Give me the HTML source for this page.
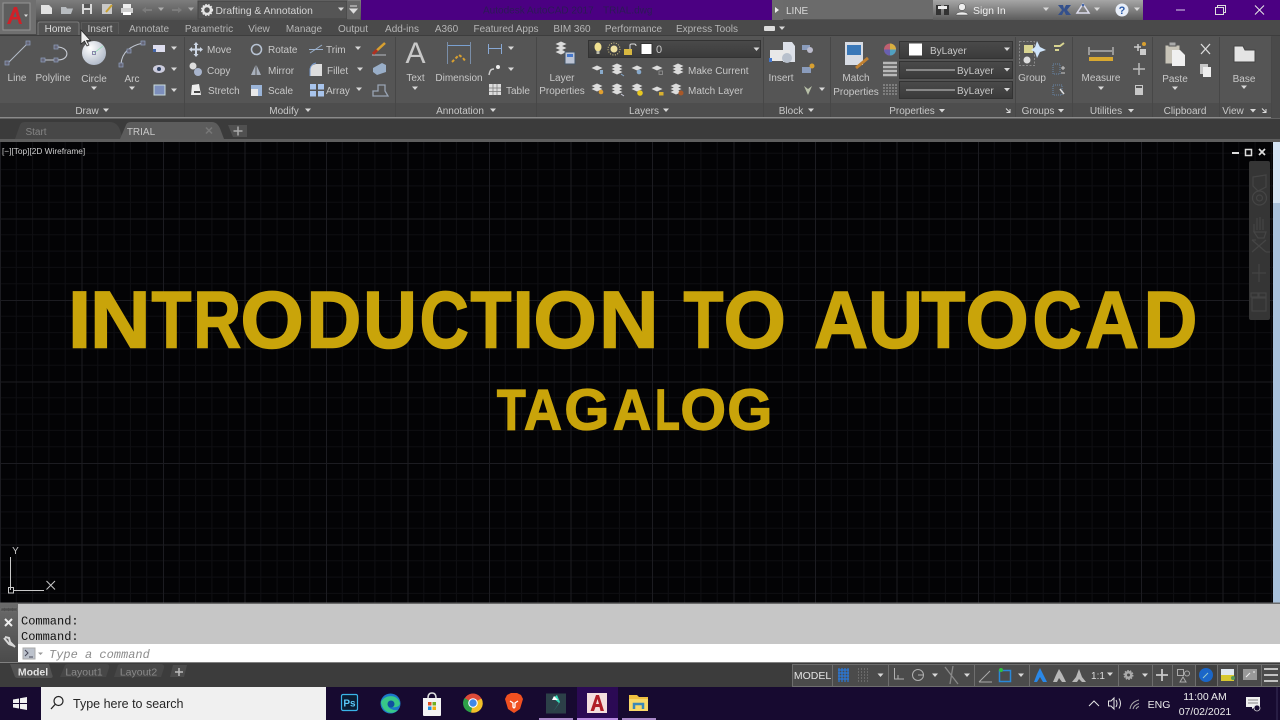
<!DOCTYPE html>
<html><head><meta charset="utf-8"><title>AutoCAD</title>
<style>
html,body{margin:0;padding:0;background:#000;width:1280px;height:720px;overflow:hidden}
svg{display:block;filter:blur(.3px)}
text{font-family:"Liberation Sans",sans-serif;font-size:10px;fill:#c8c8c8}
.m{text-anchor:middle}
.h{font-weight:700;fill:#c9a40a;font-size:81px;stroke:#c9a40a;stroke-width:1.500px}
.s{font-weight:700;fill:#c9a40a;font-size:57.500px;stroke:#c9a40a;stroke-width:1.300px}
.c{font-family:"Liberation Mono",monospace;font-size:12px;fill:#111}
</style></head><body>
<svg width="1280" height="720" viewBox="0 0 1280 720" xmlns="http://www.w3.org/2000/svg">
<defs>
<linearGradient id="tg" x1="0" y1="0" x2="0" y2="1"><stop offset="0" stop-color="#7d7d7d"/><stop offset="1" stop-color="#525252"/></linearGradient>
<linearGradient id="sg" x1="0" y1="0" x2="0" y2="1"><stop offset="0" stop-color="#a6a6a6"/><stop offset="1" stop-color="#5c5c5c"/></linearGradient>
<linearGradient id="cg" x1="0" y1="0" x2="0" y2="1"><stop offset="0" stop-color="#4a4a4a"/><stop offset="1" stop-color="#3a3a3a"/></linearGradient>
<linearGradient id="lg" x1="0" y1="0" x2="0" y2="1"><stop offset="0" stop-color="#6a6a6a"/><stop offset="1" stop-color="#4a4a4a"/></linearGradient>
<radialGradient id="circ" cx=".35" cy=".3" r=".8"><stop offset="0" stop-color="#fff"/><stop offset="1" stop-color="#aab4c4"/></radialGradient>
<pattern id="grid" patternUnits="userSpaceOnUse" width="81.5" height="81.5" y="55.5">
<path d="M16.3 0V81.5M32.6 0V81.5M48.9 0V81.5M65.2 0V81.5M0 16.3H81.5M0 32.6H81.5M0 48.9H81.5M0 65.2H81.5" stroke="#0e0e12" stroke-width="1" fill="none"/>
<path d="M.5 0V81.5M0 .5H81.5" stroke="#1c1c21" stroke-width="1" fill="none"/>
</pattern>
<g id="arr"><path d="M-3 -1.5H3L0 2Z" fill="#d8d8d8"/></g>
<g id="lay"><path d="M-5.5 0L0 -2.500L5.500 0L0 2.500Z" fill="#dcdcdc"/></g>
</defs>

<!-- title bar -->
<rect width="1280" height="20" fill="url(#tg)"/>
<rect x="361" width="411" height="20" fill="#4b0082"/>
<rect x="1143" width="137" height="20" fill="#4b0082"/>
<rect x="772" width="11" height="20" fill="#6c6c6c"/>
<path d="M775 7L779 10L775 13Z" fill="#eee"/>
<rect x="783" width="150" height="19" fill="#6b6b6b"/>
<text x="786" y="14" style="font-size:10px;fill:#d8d8d8">LINE</text>
<rect x="933" width="210" height="20" fill="url(#sg)"/>
<text x="483" y="13.500" style="fill:#2c1a55">Autodesk AutoCAD 2017</text>
<text x="603" y="13.500" style="fill:#2c1a55">TRIAL.dwg</text>
<!-- QAT -->
<path d="M41 5H49L52 8V14H41Z" fill="#e2e2e2"/>
<path d="M61 7H66L67 8.500H73L71 14H61Z" fill="#b8bcc0"/>
<rect x="82" y="4" width="10" height="10" fill="#d8d8d8"/><rect x="84" y="4" width="6" height="4" fill="#555"/><rect x="84" y="10" width="6" height="4" fill="#666"/>
<rect x="102" y="4" width="10" height="10" fill="#c8c8c8"/><path d="M106 12L112 5" stroke="#c9a030" stroke-width="2"/>
<rect x="121" y="8" width="12" height="5" fill="#d0d0d0"/><rect x="123" y="4" width="8" height="4" fill="#eee"/><rect x="123" y="12" width="8" height="3" fill="#fff"/>
<path d="M142 10L146 7V13ZM146 9H152V11H146Z" fill="#7c7c7c"/><use href="#arr" x="161" y="9" opacity=".6"/>
<path d="M182 10L178 7V13ZM172 9H178V11H172Z" fill="#7c7c7c"/><use href="#arr" x="191" y="9" opacity=".6"/>
<rect x="198" y="1" width="149" height="18" fill="#555" stroke="#444"/>
<circle cx="207" cy="10" r="4" fill="none" stroke="#e4e4e4" stroke-width="2.500"/>
<circle cx="207" cy="10" r="5.500" fill="none" stroke="#e4e4e4" stroke-width="1.200" stroke-dasharray="1.500 1.500"/>
<text x="215.500" y="14" style="font-size:10.300px;fill:#d4d4d4">Drafting &amp; Annotation</text>
<use href="#arr" x="341" y="9"/>
<rect x="347" y="1" width="13" height="18" fill="#666"/>
<path d="M350 6H357M350 9H357L353.500 13Z" stroke="#ddd" stroke-width="1" fill="#ddd"/>
<!-- right of title -->
<path d="M936 5H941V15H936ZM944 5H949V15H944Z" fill="#333"/><rect x="938" y="6" width="9" height="3" fill="#eee"/>
<circle cx="962" cy="7" r="3.500" fill="#eee" stroke="#444" stroke-width=".500"/><path d="M956 15C956 11 968 11 968 15Z" fill="#eee" stroke="#444" stroke-width=".500"/>
<text x="973" y="14" style="font-size:10.500px;fill:#f0f0f0">Sign In</text>
<use href="#arr" x="1046" y="9" />
<path d="M1058 5L1063 5L1064 9L1066 5H1071L1067 10L1071 15H1066L1064 11L1062 15H1058L1062 10Z" fill="#34508c"/>
<path d="M1083 4L1089 13H1077Z" fill="none" stroke="#dde" stroke-width="1.500"/><circle cx="1083" cy="5" r="1.300" fill="#46a"/><use href="#arr" x="1097" y="9"/>
<circle cx="1122" cy="10" r="6.500" fill="#e8eef8"/><text x="1122" y="14" class="m" style="font-size:11px;font-weight:700;fill:#2a5aa8">?</text>
<use href="#arr" x="1137" y="9"/>
<path d="M1176 10H1185" stroke="#d8d0e8" stroke-width="1"/>
<path d="M1215.500 7.500H1223.500V14.500H1215.500ZM1217.500 7.500V5.500H1225.500V12.500H1223.500" fill="none" stroke="#ddd" stroke-width="1"/>
<path d="M1255 5.500L1264 14.500M1264 5.500L1255 14.500" stroke="#e8e8e8" stroke-width="1"/>

<!-- tabs row -->
<rect y="20" width="1280" height="16" fill="#4a4a4a"/>
<rect x="0" y="0" width="36" height="34" fill="#6f6f6f"/>
<rect x="3" y="3" width="27" height="27" fill="#5e5e5e" stroke="#959595"/>
<path d="M7 24L14 7H17L22 24H19L17.700 19.500H12.300L10.300 24ZM13.300 17H16.800L15.300 11.500Z" fill="#cf2128"/>
<path d="M24 14.500H28L26 17Z" fill="#ddd"/>
<path d="M38 36V24Q38 22 40 22H77Q79 22 79 24V36Z" fill="#535353" stroke="#7a7a7a"/>
<path d="M81.500 34V22.500H118.500V34" fill="#4d4d4d" stroke="#5a5a5a"/>
<g>
<text x="58" y="32" class="m" style="fill:#dcdcdc">Home</text>
<text x="100" y="32" class="m">Insert</text>
<text x="149" y="32" class="m" style="fill:#b5b5b5">Annotate</text>
<text x="209" y="32" class="m" style="fill:#b5b5b5">Parametric</text>
<text x="259" y="32" class="m" style="fill:#b5b5b5">View</text>
<text x="304" y="32" class="m" style="fill:#b5b5b5">Manage</text>
<text x="353" y="32" class="m" style="fill:#b5b5b5">Output</text>
<text x="402" y="32" class="m" style="fill:#b5b5b5">Add-ins</text>
<text x="446.500" y="32" class="m" style="fill:#b5b5b5">A360</text>
<text x="506" y="32" class="m" style="fill:#b5b5b5">Featured Apps</text>
<text x="572" y="32" class="m" style="fill:#b5b5b5">BIM 360</text>
<text x="633.500" y="32" class="m" style="fill:#b5b5b5">Performance</text>
<text x="707" y="32" class="m" style="fill:#b5b5b5">Express Tools</text>
</g>
<rect x="764" y="26" width="11" height="5" rx="1" fill="#ddd"/><use href="#arr" x="782" y="28"/>

<!-- ribbon -->
<rect y="35" width="1280" height="1" fill="#3d3d3d"/>
<rect y="36" width="1280" height="82" fill="#555"/>
<rect y="103" width="1271" height="14" fill="#4d4d4d"/>
<rect y="117" width="1280" height="1.500" fill="#8a8a8a"/>
<rect x="1271" y="36" width="9" height="82" fill="#4a4a4a"/>
<path d="M184.500 37V117M395.500 37V117M536.500 37V117M763.500 37V117M830.500 37V117M1015.500 37V117M1072.500 37V117M1152.500 37V117M1219.500 37V117M1271.500 37V117" stroke="#474747" stroke-width="1"/>

<!-- Draw -->
<path d="M7 64L28 43" stroke="#b4bcc8" stroke-width="1"/><rect x="5" y="61" width="4" height="4" fill="#667" stroke="#8fa0c0" stroke-width=".7"/><rect x="26" y="41" width="4" height="4" fill="#667" stroke="#8fa0c0" stroke-width=".7"/>
<path d="M43 60H58C70 60 70 47 57 47" fill="none" stroke="#c8ccd4" stroke-width="1.100"/><rect x="41" y="58" width="4" height="4" fill="#667" stroke="#8fa0c0" stroke-width=".7"/><rect x="54" y="58" width="4" height="4" fill="#667" stroke="#8fa0c0" stroke-width=".7"/><rect x="54" y="45" width="4" height="4" fill="#667" stroke="#8fa0c0" stroke-width=".7"/>
<circle cx="94" cy="53" r="12" fill="url(#circ)"/><path d="M94 53L103 46" stroke="#9db" stroke-width=".8"/><rect x="92.500" y="51.500" width="3" height="3" fill="none" stroke="#88a"/>
<path d="M121 64C122 52 130 46 143 43" fill="none" stroke="#c0c6d0" stroke-width="1.100"/><rect x="119" y="63" width="4" height="4" fill="#667" stroke="#8fa0c0" stroke-width=".7"/><rect x="127" y="49" width="4" height="4" fill="#667" stroke="#8fa0c0" stroke-width=".7"/><rect x="141" y="41" width="4" height="4" fill="#667" stroke="#8fa0c0" stroke-width=".7"/>
<text x="17" y="81" class="m">Line</text><text x="53" y="81" class="m">Polyline</text><text x="94" y="82" class="m">Circle</text><text x="132" y="82" class="m">Arc</text>
<use href="#arr" x="94" y="88"/><use href="#arr" x="132" y="88"/>
<path d="M153 45H165V52H153Z" fill="#dde"/><rect x="153" y="49" width="3" height="3" fill="#46a"/><use href="#arr" x="174" y="48"/>
<ellipse cx="159" cy="69" rx="6" ry="4" fill="#ccd"/><circle cx="159" cy="69" r="2" fill="#346"/><use href="#arr" x="174" y="69"/>
<rect x="154" y="85" width="11" height="10" fill="#7d8fbc" stroke="#cdd" /><use href="#arr" x="174" y="90"/>
<text x="87" y="114" class="m">Draw</text><use href="#arr" x="106" y="110"/>

<!-- Modify -->
<path d="M196 44V55M190.500 49.500H201.500" stroke="#cdd6e4" stroke-width="2"/><path d="M196 42L198.500 45H193.500ZM196 57L198.500 54H193.500ZM189 49.500L192 47V52ZM203 49.500L200 47V52Z" fill="#cdd6e4"/>
<circle cx="193" cy="66" r="3.500" fill="#ddd"/><circle cx="198" cy="72" r="4" fill="#a8b4cc"/>
<path d="M192 85L199 84L201 95H191Z" fill="#eee"/><path d="M194 92H200" stroke="#111" stroke-width="1.500"/>
<text x="207" y="53">Move</text><text x="207" y="74">Copy</text><text x="208" y="94">Stretch</text>
<circle cx="256.500" cy="49.500" r="5" fill="none" stroke="#b8c4d4" stroke-width="1.500"/>
<path d="M251 75L256 64L261 75Z" fill="#a8b0bc"/><path d="M256 64V75" stroke="#555"/>
<rect x="251" y="85" width="11" height="11" fill="#9ab4d8"/><rect x="251" y="89" width="7" height="7" fill="#e8e8e8"/>
<text x="268" y="53">Rotate</text><text x="268" y="74">Mirror</text><text x="268" y="94">Scale</text>
<path d="M310 53L322 45M309 49.500H323" stroke="#9ab0cc" stroke-width="1"/>
<path d="M310 76V70Q310 65 316 64H322V76Z" fill="#ddd"/><path d="M310 76V69Q311 64 316 63" stroke="#79c" fill="none"/>
<rect x="310" y="84" width="6" height="5.500" fill="#a8c4ec"/><rect x="318" y="84" width="6" height="5.500" fill="#a8c4ec"/><rect x="310" y="91" width="6" height="5.500" fill="#a8c4ec"/><rect x="318" y="91" width="6" height="5.500" fill="#a8c4ec"/>
<text x="326" y="53">Trim</text><text x="327" y="74">Fillet</text><text x="326" y="94">Array</text>
<use href="#arr" x="358" y="48"/><use href="#arr" x="360" y="69"/><use href="#arr" x="359" y="89"/>
<path d="M374 53L385 43" stroke="#d8a030" stroke-width="2.500"/><path d="M372 55H386" stroke="#b8bcc4" stroke-width="1"/><path d="M373 54L377 50" stroke="#b03020" stroke-width="3"/>
<path d="M373 68L382 63L386 65V72L377 75L373 72Z" fill="#99aec8"/>
<path d="M373 96V91H378V85H385V91L388 96Z" fill="none" stroke="#99a4b4" stroke-width="1.300"/>
<text x="284" y="114" class="m">Modify</text><use href="#arr" x="308" y="110"/>

<!-- Annotation -->
<text x="415.500" y="63" class="m" style="font-size:30px;fill:#c8c8c8">A</text>
<text x="415.500" y="81" class="m">Text</text><use href="#arr" x="415" y="88"/>
<path d="M447.500 42V64M470.500 42V64" stroke="#7a8ea8" stroke-width="1"/><path d="M448 45.500H470" stroke="#7aa0d0" stroke-width="1"/>
<path d="M452 62L456 58L459 55L463 58L466 62" stroke="#d8a030" stroke-width="2" stroke-dasharray="3 2" fill="none"/>
<text x="459" y="81" class="m">Dimension</text>
<path d="M488.500 44V54M501.500 44V54M489 48.500H501" stroke="#88a8d4" stroke-width="1"/><use href="#arr" x="511" y="48"/>
<path d="M489 75C490 70 491 69 494 69" fill="none" stroke="#ccc" stroke-width="1.500"/><circle cx="498" cy="67" r="2" fill="#eee"/><use href="#arr" x="511" y="69"/>
<rect x="489" y="84" width="12" height="11" fill="#dcdcdc"/><path d="M489 88H501M489 91.500H501M493 84V95M497 84V95" stroke="#777" stroke-width=".700"/>
<text x="506" y="94">Table</text>
<text x="460" y="114" class="m">Annotation</text><use href="#arr" x="493" y="110"/>

<!-- Layers -->
<use href="#lay" x="561" y="44"/><use href="#lay" x="561" y="48"/><use href="#lay" x="561" y="52"/>
<rect x="565" y="52" width="10" height="12" fill="#bcc4d4" stroke="#456"/><rect x="567" y="54" width="6" height="3" fill="#47c"/>
<text x="562" y="81" class="m">Layer</text><text x="562" y="94" class="m">Properties</text>
<rect x="588.500" y="40.500" width="172" height="17" fill="url(#cg)" stroke="#333"/>
<ellipse cx="598" cy="47" rx="3.500" ry="4.500" fill="#f0e090"/><rect x="596.500" y="51" width="3" height="3" fill="#bba"/>
<circle cx="614" cy="49" r="3.500" fill="#eee0a0"/><circle cx="614" cy="49" r="6" fill="none" stroke="#d8c888" stroke-width="1" stroke-dasharray="1 1.500"/>
<rect x="624" y="49" width="8" height="6" fill="#d8b840"/><path d="M630 49V45Q630 44 632 44H634Q636 44 636 46" stroke="#ddd" fill="none"/>
<rect x="641" y="43.500" width="11" height="11" fill="#fff" stroke="#333"/>
<text x="656" y="53" style="font-size:11px">0</text><use href="#arr" x="756.500" y="49"/>
<g>
<use href="#lay" x="597" y="68"/><rect x="600" y="70" width="3" height="4" fill="#8ac"/>
<use href="#lay" x="617" y="66"/><use href="#lay" x="617" y="69"/><use href="#lay" x="617" y="72"/><path d="M621 74L624 76" stroke="#8ac"/>
<use href="#lay" x="637" y="68"/><circle cx="639" cy="72" r="2.300" fill="#8ac"/>
<use href="#lay" x="657" y="68"/><rect x="659" y="71" width="3.500" height="3.500" fill="none" stroke="#888"/>
<use href="#lay" x="678" y="66"/><use href="#lay" x="678" y="69"/><use href="#lay" x="678" y="72"/>
<use href="#lay" x="597" y="86"/><use href="#lay" x="597" y="89"/><circle cx="601" cy="92" r="2.300" fill="#e0a030"/>
<use href="#lay" x="617" y="86"/><use href="#lay" x="617" y="89"/><use href="#lay" x="617" y="92"/><path d="M621 94L624 96" stroke="#ccd"/>
<use href="#lay" x="637" y="86"/><use href="#lay" x="637" y="89"/><circle cx="640" cy="93" r="2.800" fill="#e8c820"/>
<use href="#lay" x="657" y="89"/><rect x="659" y="92" width="4.500" height="3.500" fill="#d8b030"/>
<use href="#lay" x="676" y="86"/><use href="#lay" x="676" y="89"/><use href="#lay" x="676" y="92"/><circle cx="681" cy="93" r="2.500" fill="#a85828"/>
</g>
<text x="688" y="74">Make Current</text><text x="688" y="94">Match Layer</text>
<text x="644" y="114" class="m">Layers</text><use href="#arr" x="666" y="110"/>

<!-- Block -->
<path d="M783 42H792L795 46V62H783Z" fill="#dce0e8"/><rect x="770" y="50" width="20" height="11" fill="#e8e8e8"/><rect x="769" y="58" width="3" height="4" fill="#47c"/><circle cx="787" cy="58" r="5" fill="#b8c0cc"/>
<text x="781" y="81" class="m">Insert</text>
<rect x="802" y="45" width="8" height="5" fill="#8a9cbc"/><circle cx="810" cy="50" r="3" fill="#bbc"/>
<rect x="802" y="67" width="9" height="6" fill="#8a9cbc"/><circle cx="812" cy="66" r="2.500" fill="#d8a030"/>
<path d="M804 86L808 95L812 86L808 89Z" fill="#b8c0a8"/><use href="#arr" x="822" y="89"/>
<text x="791" y="114" class="m">Block</text><use href="#arr" x="811" y="110"/>

<!-- Properties -->
<rect x="845" y="42" width="18" height="23" fill="#d8dce4"/><rect x="847" y="45" width="14" height="10" fill="#3a78b8"/>
<path d="M856 68L868 58" stroke="#c08030" stroke-width="3"/>
<text x="856" y="81" class="m">Match</text><text x="856" y="95" class="m">Properties</text>
<circle cx="890" cy="49.500" r="6" fill="#c06070"/><path d="M890 43.500A6 6 0 0 1 896 49.500H890Z" fill="#d8b040"/><path d="M890 49.500H896A6 6 0 0 1 890 55.500Z" fill="#50a0c0"/><path d="M890 49.500V55.500A6 6 0 0 1 884 49.500Z" fill="#6860b0"/>
<path d="M883 63H897M883 67H897M883 71H897M883 75H897" stroke="#b8b8b8" stroke-width="2.500"/>
<path d="M883 85H897M883 88H897M883 91H897M883 94H897" stroke="#a8a8a8" stroke-width="1" stroke-dasharray="2 1"/>
<rect x="899.500" y="41.500" width="113" height="17" fill="url(#cg)" stroke="#333"/>
<rect x="909" y="43.500" width="13" height="12" fill="#fff"/><text x="930" y="54">ByLayer</text><use href="#arr" x="1007" y="49"/>
<rect x="899.500" y="61.500" width="113" height="17" fill="url(#cg)" stroke="#333"/>
<path d="M906 70H955" stroke="#ccc"/><text x="957" y="74">ByLayer</text><use href="#arr" x="1007" y="69.500"/>
<rect x="899.500" y="81.500" width="113" height="17" fill="url(#cg)" stroke="#333"/>
<path d="M906 90H955" stroke="#ccc"/><text x="957" y="94">ByLayer</text><use href="#arr" x="1007" y="89.500"/>
<text x="912" y="114" class="m">Properties</text><use href="#arr" x="942" y="110.500"/>
<path d="M1006 108.500L1010 112.500M1010 109V112.500H1006.500" stroke="#ddd" fill="none"/>

<!-- Groups -->
<rect x="1019.500" y="41.500" width="15" height="24" fill="none" stroke="#8a8a8a" stroke-dasharray="2 1.500"/>
<rect x="1024" y="45" width="9" height="8" fill="#d8d490"/><circle cx="1027" cy="60" r="3.500" fill="#ddd"/>
<path d="M1037 41L1040 47L1046 50L1040 52L1037 58L1035 52L1031 50L1035 47Z" fill="#cfe4fa"/>
<text x="1032" y="81" class="m">Group</text>
<path d="M1054 46L1060 46L1064 43M1055 50H1059" stroke="#d8d490" stroke-width="2" fill="none"/>
<rect x="1053" y="64" width="7" height="10" fill="none" stroke="#68a" stroke-dasharray="1 1"/><path d="M1061 68H1065M1063 66V70M1061 73H1065" stroke="#ccc"/>
<rect x="1053" y="85" width="9" height="10" fill="none" stroke="#68a" stroke-dasharray="1 1"/><path d="M1060 89L1064 94" stroke="#ddd" stroke-width="1.500"/>
<text x="1038" y="114" class="m">Groups</text><use href="#arr" x="1061" y="110.500"/>

<!-- Utilities -->
<path d="M1089 47V55M1113 47V55M1090 51H1112" stroke="#ddd"/><rect x="1089" y="57" width="24" height="4" fill="#d8a830"/>
<text x="1101" y="81" class="m">Measure</text><use href="#arr" x="1101" y="88"/>
<path d="M1134 47H1141M1138 44V51" stroke="#ccc" stroke-width="1.500"/><circle cx="1144" cy="44" r="2" fill="#d8a030"/><rect x="1140" y="49" width="6" height="6" fill="#ccc"/>
<path d="M1139 63V75M1133 69H1145" stroke="#bbb" stroke-width="1.500"/>
<rect x="1135" y="85" width="8" height="10" fill="#c8c8c8"/><rect x="1136" y="86" width="6" height="2" fill="#555"/>
<text x="1106" y="114" class="m">Utilities</text><use href="#arr" x="1131" y="110.500"/>

<!-- Clipboard -->
<rect x="1165" y="45" width="15" height="19" fill="#c8c4b8" stroke="#555"/><rect x="1169" y="42" width="7" height="4" fill="#aaa" stroke="#555"/>
<path d="M1172 50H1180L1185 55V66H1172Z" fill="#f0f0f0"/>
<text x="1175" y="82" class="m">Paste</text><use href="#arr" x="1175" y="88"/>
<path d="M1201 44L1210 54M1210 44L1201 54" stroke="#ddd" stroke-width="1.300"/>
<rect x="1200" y="64" width="8" height="10" fill="#c8c8c8"/><rect x="1203" y="67" width="8" height="10" fill="#eee"/>
<text x="1185" y="114" class="m">Clipboard</text>

<!-- View -->
<path d="M1234 46H1243L1245 50H1255V62H1234Z" fill="#e4e4e4" stroke="#444"/>
<text x="1244" y="82" class="m">Base</text><use href="#arr" x="1244" y="87"/>
<text x="1233" y="114" class="m">View</text><use href="#arr" x="1253" y="110.500"/>
<path d="M1262 108.500L1266 112.500M1266 109V112.500H1262.500" stroke="#ddd" fill="none"/>

<!-- file tabs -->
<rect y="118.500" width="1280" height="21.500" fill="#3b3b3b"/>
<rect y="139" width="1280" height="3" fill="#5e5e5e"/>
<path d="M15 139L20 125Q21 122 25 122H110Q117 122 120 130L123 139Z" fill="#474747"/>
<text x="36" y="135" class="m" style="fill:#858585">Start</text>
<path d="M120 139L126 125Q127 122 131 122H212Q218 122 221 131L224 139Z" fill="#5c5c5c"/>
<text x="141" y="135" class="m" style="fill:#c8c8c8">TRIAL</text>
<path d="M206 127.500L212 133.500M212 127.500L206 133.500" stroke="#777" stroke-width="1.500"/>
<path d="M228 125H247V137H233Z" fill="#505050"/><path d="M233.500 131H242.500M238 126.500V135.500" stroke="#aaa" stroke-width="1.500"/>

<!-- canvas -->
<rect y="142" width="1280" height="461" fill="#030305"/>
<rect y="142" width="1273" height="461" fill="url(#grid)"/>
<rect x="1273" y="142" width="7" height="461" fill="#a9c2dc"/>
<rect x="1273" y="142" width="7" height="61" fill="#d4e4f4"/>
<text x="2" y="154" style="font-size:8.300px;fill:#cfcfcf">[&#8722;][Top][2D Wireframe]</text>
<path d="M1232 153H1239" stroke="#ddd" stroke-width="2"/>
<rect x="1245.500" y="149.500" width="6" height="6" fill="none" stroke="#ddd" stroke-width="1.500"/>
<path d="M1259 149L1265 155M1265 149L1259 155" stroke="#ddd" stroke-width="1.700"/>

<!-- nav bar -->
<rect x="1249" y="161" width="21" height="159" rx="2" fill="#353535"/>
<g fill="none" stroke="#454545" stroke-width="1.200">
<path d="M1253 177L1266 175V187L1258 191L1253 186Z"/>
<circle cx="1259.500" cy="198" r="7"/><circle cx="1259.500" cy="198" r="3"/>
<path d="M1254 232V224M1257 230V218M1260 230V217M1263 230V219M1266 232L1254 232L1258 238H1264Z"/>
<path d="M1252 240L1266 252M1266 240L1252 252M1252 240H1256M1266 252L1270 252"/>
<path d="M1259 264V282M1252 273H1266"/>
<rect x="1251" y="293" width="7" height="4"/><rect x="1259" y="293" width="7" height="4"/>
<rect x="1252" y="298" width="14" height="13"/>
</g>

<!-- Title text -->
<g>
<text class="h" transform="translate(67.900,347.500) scale(1.040,1)">I</text>
<text class="h" transform="translate(89.900,347.500) scale(1.040,1)">N</text>
<text class="h" transform="translate(151.500,347.500) scale(.808,1)">T</text>
<text class="h" transform="translate(193.200,347.500) scale(.818,1)">R</text>
<text class="h" transform="translate(240.400,347.500) scale(1.008,1)">O</text>
<text class="h" transform="translate(306.500,347.500) scale(.938,1)">D</text>
<text class="h" transform="translate(363.100,347.500) scale(.920,1)">U</text>
<text class="h" transform="translate(419.600,347.500) scale(.842,1)">C</text>
<text class="h" transform="translate(470.500,347.500) scale(.828,1)">T</text>
<text class="h" transform="translate(512.400,347.500) scale(.960,1)">I</text>
<text class="h" transform="translate(533.400,347.500) scale(1.008,1)">O</text>
<text class="h" transform="translate(599,347.500) scale(1.020,1)">N</text>
<text class="h" transform="translate(683.500,347.500) scale(.808,1)">T</text>
<text class="h" transform="translate(723.500,347.500) scale(.992,1)">O</text>
<text class="h" transform="translate(814,347.500) scale(.923,1)">A</text>
<text class="h" transform="translate(868,347.500) scale(.939,1)">U</text>
<text class="h" transform="translate(921.400,347.500) scale(.889,1)">T</text>
<text class="h" transform="translate(965.400,347.500) scale(1.008,1)">O</text>
<text class="h" transform="translate(1032.600,347.500) scale(.842,1)">C</text>
<text class="h" transform="translate(1085,347.500) scale(.923,1)">A</text>
<text class="h" transform="translate(1143.600,347.500) scale(.919,1)">D</text>
<text class="s" transform="translate(496.900,429.500) scale(.822,1)">T</text>
<text class="s" transform="translate(524,429.500) scale(.915,1)">A</text>
<text class="s" transform="translate(564.400,429.500) scale(1.005,1)">G</text>
<text class="s" transform="translate(613,429.500) scale(.915,1)">A</text>
<text class="s" transform="translate(655.100,429.500) scale(.705,1)">L</text>
<text class="s" transform="translate(680.400,429.500) scale(1.020,1)">O</text>
<text class="s" transform="translate(727.400,429.500) scale(1.005,1)">G</text>
</g>

<!-- UCS -->
<text x="15.500" y="554" class="m" style="font-size:10px;fill:#c8c8c8">Y</text>
<path d="M10.500 557V590M14 590.500H44" stroke="#c8c8c8" stroke-width="1" fill="none"/>
<rect x="8.500" y="587.500" width="5" height="5.500" fill="none" stroke="#c8c8c8"/>
<path d="M46.500 581L55 589.500M55 581L46.500 589.500" stroke="#c8c8c8" stroke-width="1"/>

<!-- cursor -->
<path d="M81 30V44L84.500 41L87 46L89 45L86.500 40.500H90.500Z" fill="#eee" stroke="#222" stroke-width=".700"/>

<!-- command -->
<rect y="602.500" width="1280" height="2" fill="#6a6a6a"/>
<rect y="604" width="1280" height="41" fill="#c6c6c6"/>
<rect y="644" width="1280" height="18" fill="#fff"/>
<rect y="604" width="18" height="59" fill="url(#lg)"/>
<rect x="1" y="608" width="16" height="3" fill="#4f4f4f" stroke="#777" stroke-dasharray="3 1" stroke-width=".500"/>
<path d="M5 619L12 626M12 619L5 626" stroke="#eee" stroke-width="2"/>
<path d="M4 638L9 644L14 646M5 637L9 638L10 642L15 647" stroke="#d8d8d8" stroke-width="2" fill="none"/>
<text x="21" y="624.500" class="c">Command:</text>
<text x="21" y="640" class="c">Command:</text>
<rect x="23" y="648" width="12" height="11" fill="#bcc2cc" stroke="#aaa"/>
<path d="M25 650L28 653L25 656M29 657H33" stroke="#445" fill="none"/>
<path d="M38 652.500H43L40.500 655Z" fill="#999"/>
<text x="49" y="658" class="c" style="font-style:italic;fill:#8c8c8c">Type a command</text>
<rect y="662" width="1280" height="1.500" fill="#808080"/>

<!-- status -->
<rect y="663" width="1280" height="24" fill="#3c3c3c"/>
<path d="M10 664L15 677Q16 678 18 678H50Q54 678 52 674L49 664Z" fill="#535353"/>
<text x="33" y="675.500" class="m" style="font-weight:700;fill:#e4e4e4;font-size:10.500px">Model</text>
<path d="M60 677L65 665Q66 664 68 664H106Q110 664 109 668L106 677Z" fill="#474747"/>
<text x="84" y="675.500" class="m" style="fill:#8a8a8a;font-size:10.500px">Layout1</text>
<path d="M114 677L118 665Q119 664 121 664H160Q165 664 164 668L161 677Z" fill="#474747"/>
<text x="138.500" y="675.500" class="m" style="fill:#8a8a8a;font-size:10.500px">Layout2</text>
<path d="M170 677L173 665H187L184 677Z" fill="#4c4c4c"/><path d="M175 672H183M179 668V676" stroke="#bbb" stroke-width="1.500"/>

<rect x="792.500" y="664.500" width="40" height="22" fill="#4b4b4b" stroke="#6e6e6e"/>
<rect x="833" y="664" width="447" height="23" fill="#4b4b4b"/>
<path d="M832.500 686.500H1280M832.500 664.500H1280M888.500 664V687M974.500 664V687M1029.500 664V687M1118.500 664V687M1152.500 664V687M1172.500 664V687M1195.500 664V687M1217.500 664V687M1237.500 664V687M1261.500 664V687" stroke="#6e6e6e" stroke-width="1"/>
<text x="812.500" y="679" class="m" style="font-size:10.500px;fill:#e4e4e4">MODEL</text>
<path d="M838 670H849M838 673H849M838 676H849M838 679H849M839 668V682M842 668V682M845 668V682M848 668V682" stroke="#2a78d8" stroke-width="1.200"/>
<path d="M858 669H870M858 672H870M858 675H870M858 678H870M858 681H870" stroke="#8a8a8a" stroke-width="1" stroke-dasharray="1 2"/>
<use href="#arr" x="880.500" y="675"/>
<path d="M894.500 668V679H904" stroke="#b0b0b0" fill="none"/><path d="M898 675V679" stroke="#b0b0b0"/>
<circle cx="918" cy="675" r="5.500" fill="none" stroke="#b0b0b0"/><path d="M918 675H924" stroke="#b0b0b0"/>
<use href="#arr" x="935" y="675"/>
<path d="M945 667L958 684M953 666L950 684" stroke="#888" stroke-width="1.300"/>
<use href="#arr" x="967" y="675"/>
<path d="M979 682H992M979 682L990 671" stroke="#aaa" fill="none"/>
<rect x="999.500" y="670.500" width="11" height="11" fill="none" stroke="#2a88d8" stroke-width="1.500"/><circle cx="1001" cy="670" r="2" fill="#30c040"/>
<use href="#arr" x="1021" y="675"/>
<path d="M1040 668L1037 674L1034 682H1037L1040 677L1043 682H1047L1043 674Z" fill="#2a88e8"/>
<path d="M1059 669L1056 675L1053 682H1057L1059 678L1062 682H1066L1062 674Z" fill="#b8b8b8"/>
<path d="M1079 669L1076 677L1072 682H1077L1079 679L1082 682H1086L1082 677Z" fill="#b8b8b8"/>
<text x="1098" y="679" class="m" style="fill:#ddd">1:1</text><use href="#arr" x="1110" y="674"/>
<circle cx="1128.500" cy="675" r="4" fill="#aaa" stroke="#aaa" stroke-width="2" stroke-dasharray="1.500 1"/><circle cx="1128.500" cy="675" r="1.500" fill="#4b4b4b"/>
<use href="#arr" x="1145" y="675"/>
<path d="M1162 669V681M1156 675H1168" stroke="#c8c8c8" stroke-width="1.800"/>
<rect x="1177.500" y="669.500" width="6" height="6" fill="none" stroke="#aaa"/><circle cx="1187" cy="673.500" r="2.500" fill="none" stroke="#aaa"/><path d="M1183 677L1186 682H1180Z" fill="none" stroke="#aaa"/>
<rect x="1196" y="665" width="21" height="21" fill="#404040"/><circle cx="1206" cy="675" r="7" fill="#1a66c8"/><path d="M1203 678L1208 673" stroke="#9cc" />
<rect x="1221" y="669" width="13" height="11" fill="#e0e8f0"/><rect x="1221" y="675" width="13" height="6" fill="#d8c830"/><circle cx="1233" cy="678" r="2" fill="#589858"/>
<rect x="1243" y="669" width="14" height="11" fill="#999"/><path d="M1246 677L1250 673M1253 672H1255" stroke="#eee"/>
<path d="M1264 669H1278M1264 675H1278M1264 681H1278" stroke="#d4d4d4" stroke-width="1.800"/>

<!-- taskbar -->
<rect y="687" width="1280" height="33" fill="#170a30"/>
<path d="M13 699.500L19 698.500V703H13ZM20 698.300L27 697V703H20ZM13 704H19V708.500L13 707.500ZM20 704H27V710L20 708.700Z" fill="#f0f0f0"/>
<rect x="41" y="687" width="285" height="33" fill="#f0f0f0"/>
<circle cx="58.500" cy="701" r="4.500" fill="none" stroke="#222" stroke-width="1.200"/><path d="M55 704.500L51 709" stroke="#222" stroke-width="1.300"/>
<text x="73" y="708" style="font-size:12.500px;fill:#262626">Type here to search</text>

<rect x="341.500" y="694.500" width="16" height="16" rx="1.500" fill="#0a1c34" stroke="#3ab4e8" stroke-width="1.200"/>
<text x="349.500" y="706.500" class="m" style="font-size:10px;font-weight:700;fill:#5cc8f8">Ps</text>
<circle cx="390.500" cy="703.500" r="10" fill="#1c78c8"/><path d="M381 702C384 695 397 693 400 703C400 708 392 708 388 706C389 709 395 711 398 710C392 716 382 712 381 702Z" fill="#38c888"/><circle cx="391" cy="704" r="3.500" fill="#1050a0"/>
<path d="M423 698H441V715Q441 716 440 716H424Q423 716 423 715Z" fill="#f4f4f4"/><path d="M428 698Q428 693 432 693Q436 693 436 698" stroke="#ddd" fill="none" stroke-width="1.500"/>
<rect x="428" y="702" width="3.500" height="3.500" fill="#e05020"/><rect x="432.500" y="702" width="3.500" height="3.500" fill="#70b020"/><rect x="428" y="706.500" width="3.500" height="3.500" fill="#2090e0"/><rect x="432.500" y="706.500" width="3.500" height="3.500" fill="#f0b010"/>
<circle cx="473" cy="703" r="9.500" fill="#dd4a38"/><path d="M473 703L481.500 698.500A9.500 9.500 0 0 1 471 712.500Z" fill="#f2c028"/><path d="M473 703L471 712.500A9.500 9.500 0 0 1 464.500 698Z" fill="#2ca048"/><circle cx="473" cy="703" r="4.800" fill="#fff"/><circle cx="473" cy="703" r="3.700" fill="#3f88e8"/>
<path d="M507 695L511 693H517L521 695L523 699L520 709L514 713L508 709L505 699Z" fill="#f05020"/><path d="M510 701L513 703V707L514 708L515 707V703L518 701" stroke="#fff" stroke-width="1.300" fill="none"/>
<rect x="546" y="693.500" width="20" height="20" fill="#2c4048"/><path d="M553 698L557 695L560 702L553 712L559 703Z" fill="#38d8b8"/><path d="M552 700H558L554 696Z" fill="#fff"/>
<rect x="577" y="687" width="41" height="33" fill="#2b0a54"/>
<rect x="587" y="693" width="20" height="20" fill="#f4dede"/>
<path d="M590.500 711L596 695H599L604 711H600.500L599.500 707H595.500L594 711ZM596 704H599L597.500 699Z" fill="#b01e28"/>
<path d="M629 695H637L639 697H648V711H629Z" fill="#f0c040"/><rect x="629" y="699" width="19" height="12" fill="#f8d868"/><path d="M634 709V704H643V709" stroke="#3a88b8" stroke-width="2.500" fill="none"/>
<rect x="539" y="718" width="34" height="2" fill="#a888c8"/><rect x="577" y="718" width="41" height="2" fill="#b88ce0"/><rect x="622" y="718" width="34" height="2" fill="#a888c8"/>
<path d="M1089 706L1094 701L1099 706" fill="none" stroke="#e4e4e4" stroke-width="1"/>
<path d="M1108.500 701H1111L1114 698V709L1111 706H1108.500Z" fill="none" stroke="#e4e4e4"/><path d="M1116 700Q1118 703.500 1116 707M1119 698.500Q1122 703.500 1119 708.500" fill="none" stroke="#e4e4e4"/>
<path d="M1130 709Q1131 702 1139 700M1133 709Q1134 705 1139 703.500M1136 709Q1137 707 1139 706.500" fill="none" stroke="#aaa"/>
<text x="1159" y="708" class="m" style="font-size:10.500px;fill:#ececec">ENG</text>
<text x="1205" y="700" class="m" style="font-size:10.500px;fill:#ececec">11:00 AM</text>
<text x="1205" y="715" class="m" style="font-size:10.500px;fill:#ececec">07/02/2021</text>
<path d="M1246 697H1260V707H1255L1252 709V707H1246Z" fill="#f0f0f0"/><path d="M1248 700H1258M1248 703H1258" stroke="#666" stroke-width=".800"/><circle cx="1257" cy="708" r="3" fill="#170a30" stroke="#ddd" stroke-width=".800"/>
<rect x="1276.500" y="687" width="1" height="33" fill="#3a3058"/>
</svg>
</body></html>
